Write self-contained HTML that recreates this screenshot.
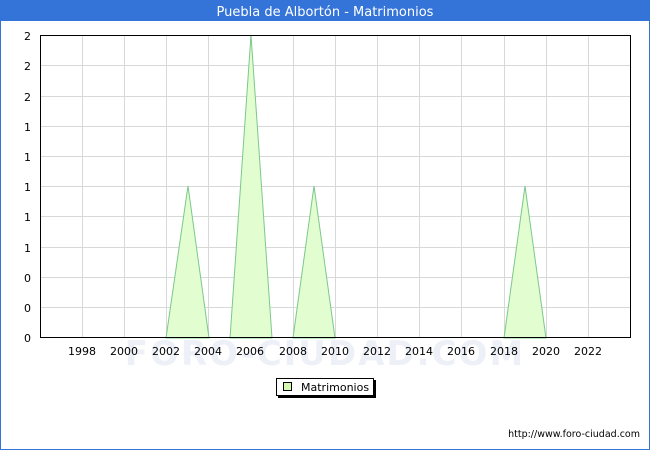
<!DOCTYPE html>
<html><head><meta charset="utf-8"><style>
body{margin:0;background:#fff}
svg{display:block;font-family:"DejaVu Sans","Liberation Sans",sans-serif}
</style></head><body>
<svg width="650" height="450" xmlns="http://www.w3.org/2000/svg">
<rect x="0.5" y="0.5" width="649" height="449" fill="#fff" stroke="#3474d8"/>
<rect x="0" y="0" width="650" height="21" fill="#3474d8"/>
<text x="325" y="16" fill="#fff" font-size="13" text-anchor="middle">Puebla de Albortón - Matrimonios</text>
<text x="325" y="365" fill="#eef0f8" font-size="34" text-anchor="middle" font-weight="bold" letter-spacing="2">FORO-CIUDAD.COM</text>
<g stroke="#d8d8d8" stroke-width="1">
<line x1="40" y1="65.5" x2="631" y2="65.5"/><line x1="40" y1="96.5" x2="631" y2="96.5"/>
<line x1="40" y1="126.5" x2="631" y2="126.5"/><line x1="40" y1="156.5" x2="631" y2="156.5"/>
<line x1="40" y1="186.5" x2="631" y2="186.5"/><line x1="40" y1="216.5" x2="631" y2="216.5"/>
<line x1="40" y1="247.5" x2="631" y2="247.5"/><line x1="40" y1="277.5" x2="631" y2="277.5"/>
<line x1="40" y1="307.5" x2="631" y2="307.5"/>
<line x1="82.5" y1="35" x2="82.5" y2="338"/><line x1="124.5" y1="35" x2="124.5" y2="338"/>
<line x1="166.5" y1="35" x2="166.5" y2="338"/><line x1="208.5" y1="35" x2="208.5" y2="338"/>
<line x1="250.5" y1="35" x2="250.5" y2="338"/><line x1="293.5" y1="35" x2="293.5" y2="338"/>
<line x1="335.5" y1="35" x2="335.5" y2="338"/><line x1="377.5" y1="35" x2="377.5" y2="338"/>
<line x1="419.5" y1="35" x2="419.5" y2="338"/><line x1="461.5" y1="35" x2="461.5" y2="338"/>
<line x1="504.5" y1="35" x2="504.5" y2="338"/><line x1="546.5" y1="35" x2="546.5" y2="338"/>
<line x1="588.5" y1="35" x2="588.5" y2="338"/>
</g>
<g fill="#e2fdd0" stroke="#7cc88c" stroke-width="1">
<polygon points="166,338 188,186 209,338"/>
<polygon points="230,338 251,35 272,338"/>
<polygon points="293,338 314,186 335,338"/>
<polygon points="504,338 525,186 546,338"/>
</g>
<rect x="40.5" y="35.5" width="590" height="302" fill="none" stroke="#000"/>
<g font-size="11" fill="#000" text-anchor="end">
<text x="31" y="40">2</text><text x="31" y="70">2</text><text x="31" y="101">2</text>
<text x="31" y="131">1</text><text x="31" y="161">1</text><text x="31" y="191">1</text>
<text x="31" y="221">1</text><text x="31" y="252">1</text><text x="31" y="282">0</text>
<text x="31" y="312">0</text><text x="31" y="342">0</text>
</g>
<g font-size="11" fill="#000" text-anchor="middle">
<text x="82" y="355">1998</text><text x="124" y="355">2000</text><text x="166" y="355">2002</text>
<text x="208" y="355">2004</text><text x="250" y="355">2006</text><text x="293" y="355">2008</text>
<text x="335" y="355">2010</text><text x="377" y="355">2012</text><text x="419" y="355">2014</text>
<text x="461" y="355">2016</text><text x="504" y="355">2018</text><text x="546" y="355">2020</text>
<text x="588" y="355">2022</text>
</g>
<rect x="278" y="380" width="98" height="18" fill="#000"/>
<rect x="276.5" y="378.5" width="97" height="17" fill="#fff" stroke="#000"/>
<rect x="283.5" y="382.5" width="8" height="8" fill="#d4f8b0" stroke="#000"/>
<text x="301" y="391" font-size="11">Matrimonios</text>
<text x="640" y="437" font-size="9.5" text-anchor="end">http://www.foro-ciudad.com</text>
</svg>
</body></html>
